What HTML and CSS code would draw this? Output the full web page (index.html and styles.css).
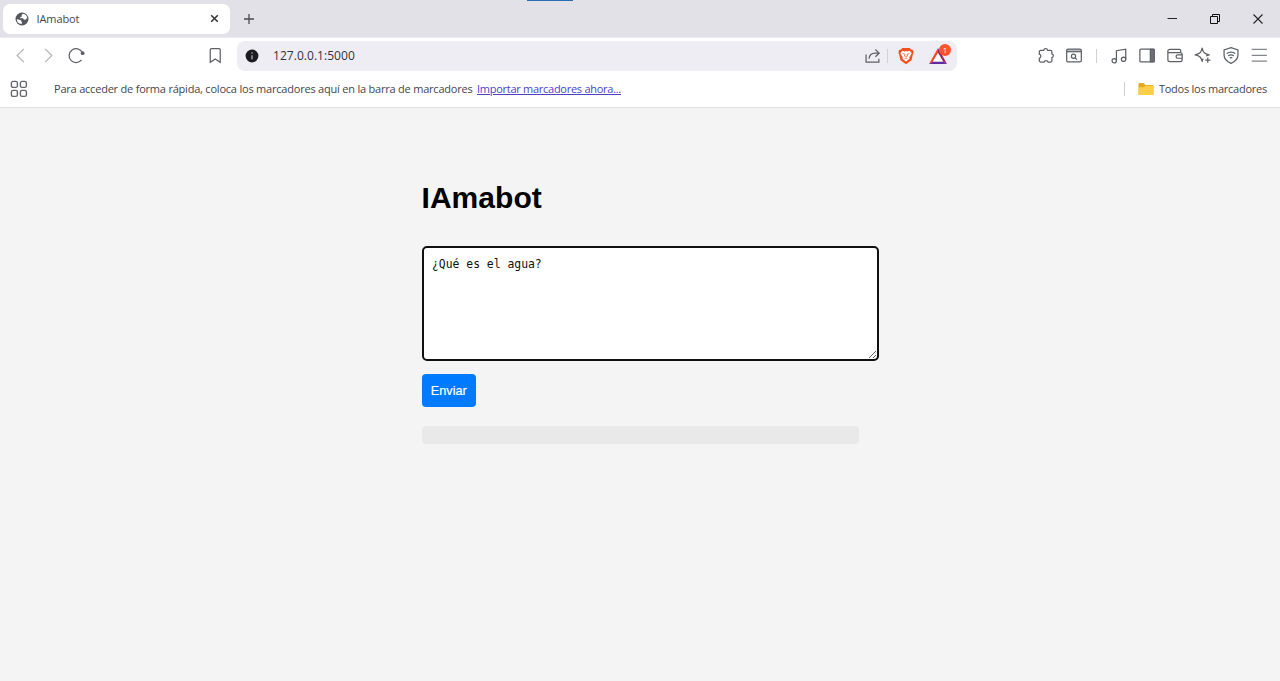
FILE: index.html
```
<!DOCTYPE html>
<html lang="es">
<head>
<meta charset="utf-8">
<title>IAmabot</title>
<link rel="stylesheet" href="styles.css">
</head>
<body>
<header class="browser">
  <div class="tabs">
    <span class="accent"></span>
    <div class="tab">
      <svg class="globe" width="14" height="14" viewBox="0 0 14 14"><circle cx="7" cy="7" r="6.500" fill="#55585d"/><path d="M8 1.800 6.500 3 7 4.500 5.200 5 5.400 6.200H8L9 7.700h1.400l1-1.300h.9A5.200 5.200 0 0 0 8 1.800ZM1.800 7.200 4.500 7.700 6.500 8.800 6.300 10 7.200 10.500 6.500 12A5.200 5.200 0 0 1 1.800 7.200Z" fill="#fff"/></svg>
      <span class="tab-title">IAmabot</span>
      <svg class="tab-close" width="9" height="9" viewBox="0 0 9 9"><path d="m1.200 1.200 6.600 6.600m0-6.600-6.600 6.600" stroke="#333" stroke-width="1.500"/></svg>
    </div>
    <svg class="new-tab" width="12" height="12" viewBox="0 0 12 12"><path d="M6 1v10M1 6h10" stroke="#4a4a50" stroke-width="1.300"/></svg>
    <div class="window-controls">
      <svg width="12" height="12" viewBox="0 0 12 12"><path d="M1.500 5.500h9.500" stroke="#222"/></svg>
      <svg width="12" height="12" viewBox="0 0 12 12"><path d="M1.500 3.500h7v7h-7zM3.500 3.500v-2h7v7h-2" fill="none" stroke="#111"/></svg>
      <svg width="12" height="12" viewBox="0 0 12 12"><path d="m1.500 1.500 9 9m0-9-9 9" stroke="#222" stroke-width="1.100"/></svg>
    </div>
  </div>
  <div class="toolbar">
    <svg class="icon faint" viewBox="0 0 20 20"><path d="m14 3-7 7 7 7"/></svg>
    <svg class="icon faint" viewBox="0 0 20 20"><path d="m7 3 7 7-7 7"/></svg>
    <svg class="icon" viewBox="0 0 20 20"><path d="M15.800 14.600A7.300 7.300 0 1 1 16.600 6.900"/><circle cx="17" cy="7.500" r="2" fill="#5f6067" stroke="none"/></svg>
    <svg class="icon bookmark" viewBox="0 0 20 20"><path d="M5 4a1.300 1.300 0 0 1 1.300-1.300h7.900A1.300 1.300 0 0 1 15.500 4v13.200l-5.200-3.500L5 17.200z"/></svg>
    <div class="address">
      <svg width="14" height="14" viewBox="0 0 14 14"><circle cx="7" cy="7" r="6.400" fill="#1b1b20"/><path d="M7 6.200v4" stroke="#aaa" stroke-width="1.400"/><circle cx="7" cy="4" r=".8" fill="#aaa"/></svg>
      <span class="url">127.0.0.1:5000</span>
      <svg class="icon share" viewBox="0 0 20 20"><path d="M2.700 9v8h13.500v-3.500M5.800 13.500c.3-4 3-6 6.700-6H16M12.500 3.700l4 3.800-4 3.800"/></svg>
      <span class="divider"></span>
      <svg class="shield" width="16" height="18" viewBox="0 0 16 18"><path d="M4.300 1h7.400l1.300 1.500 2 .5.600 2.500-.6 1.500-1.500 6.200L8 17.300l-5.500-4.100L1 7 .4 5.500 1 3l2-.5z" fill="#f4501e"/><path d="m4.300 3.800 2.400.6L8 4l1.300.4 2.400-.6 2 2.400-2.500 4.300.4 1.300L8 14.500l-3.600-2.700.4-1.300-2.500-4.300z" fill="#fff"/><path d="m4.500 6.500 2.500.8-.6 1.800L8 10l1.600-.9L9 7.300l2.500-.8M6.500 11.800 8 11l1.500.8" fill="none" stroke="#f4501e" stroke-width=".7"/></svg>
      <div class="rewards">
        <svg width="18" height="16" viewBox="0 0 18 16"><path d="M9 0 0 16l4-2.600L9 5z" fill="#ff4724"/><path d="m0 16 18-.1-4-2.500H4z" fill="#63299f"/><path d="m9 0 9 16-4-2.600L9 5z" fill="#9e1f63"/><path d="m9 5 5 8.400H4z" fill="#fff"/></svg>
        <span class="badge">1</span>
      </div>
    </div>
    <div class="actions">
      <svg class="icon" viewBox="0 0 20 20"><path d="M4.500 4.500h3a2.200 2.200 0 0 1 4.300 0h2.900a1.500 1.500 0 0 1 1.500 1.500v2.300a2 2 0 0 1 0 3.900v3.200a1.500 1.500 0 0 1-1.500 1.500h-2.500a2.200 2.200 0 0 0-4.200 0H4.500A1.500 1.500 0 0 1 3 15.400v-2.600a2.200 2.200 0 0 0 0-4.200V6a1.500 1.500 0 0 1 1.500-1.500z"/></svg>
      <svg class="icon" viewBox="0 0 20 20"><rect x="2.300" y="3.300" width="15.400" height="13.500" rx="1.500"/><path d="M2.500 6h15"/><path d="M2.500 4.500h15" opacity=".4" stroke-width="2"/><circle cx="9.500" cy="10.800" r="2.200"/><path d="m11 12.400 2 2"/></svg>
      <span class="divider"></span>
      <svg class="icon" viewBox="0 0 20 20"><circle cx="5" cy="15.500" r="2.300"/><circle cx="14.800" cy="14" r="2.300"/><path d="M7.300 15.500V5l9.800-1.700V14"/></svg>
      <svg class="icon" viewBox="0 0 20 20"><rect x="2.500" y="3.300" width="15" height="13.500" rx="1"/><path d="M13.500 3.500h4v13h-4z" fill="#6f7077"/></svg>
      <svg class="icon" viewBox="0 0 20 20"><path d="M16 7V4.800a1.300 1.300 0 0 0-1.300-1.300H4.500a2 2 0 0 0-2 2v9a2 2 0 0 0 2 2h11a2 2 0 0 0 2-2V9a2 2 0 0 0-2-2H3"/><path d="M17.500 9.300h-4.800a1.500 1.500 0 0 0-1.500 1.500v.6a1.500 1.500 0 0 0 1.500 1.500h4.800"/></svg>
      <svg class="icon" viewBox="0 0 20 20"><path d="M13.300 10.600c1-.6 2-1 3.200-1.300-5-1.100-6.400-2.500-7.400-7-1 4.500-2.400 5.900-7.400 7 5 1.100 6.400 2.500 7.400 7 .3-1.200.6-2.200 1.100-3M15 12v5.500M12.300 14.800h5.500" stroke-linejoin="round"/></svg>
      <svg class="icon" viewBox="0 0 20 20"><path d="m10 1.700 7.300 2.500v5.300c0 4-2.800 6.900-7.300 8.800-4.500-1.900-7.300-4.800-7.300-8.800V4.200z"/><path d="M5.500 8c2.800-2 6.200-2 9 0M7 10.300c2-1.300 4-1.300 6 0M8.700 12.500c1-.5 1.600-.5 2.600 0"/></svg>
      <svg class="icon menu" viewBox="0 0 20 20"><path d="M2.300 3.500h16M2.300 9.800h16M2.300 16h16"/></svg>
    </div>
  </div>
  <div class="bookmarks">
    <svg class="apps" width="18" height="18" viewBox="0 0 18 18"><g fill="none" stroke="#66676d" stroke-width="1.400"><rect x="1.400" y="1.400" width="6" height="6" rx="1.700"/><rect x="10.400" y="1.400" width="6" height="6" rx="1.700"/><rect x="1.400" y="10.400" width="6" height="6" rx="1.700"/><rect x="10.400" y="10.400" width="6" height="6" rx="1.700"/></g></svg>
    <span class="hint">Para acceder de forma rápida, coloca los marcadores aquí en la barra de marcadores</span>
    <a class="import">Importar marcadores ahora...</a>
    <span class="divider folder-divider"></span>
    <svg class="folder" width="16" height="14" viewBox="0 0 16 14"><path d="M.5 2A1 1 0 0 1 1.500 1h4L7.500 3h7a1 1 0 0 1 1 1v8a1 1 0 0 1-1 1h-13a1 1 0 0 1-1-1z" fill="#e5a920"/><path d="M.5 5.200h5.300L7.500 3.800h8V12a1 1 0 0 1-1 1h-13a1 1 0 0 1-1-1z" fill="#fbcf47"/></svg>
    <span class="all">Todos los marcadores</span>
  </div>
</header>
<main class="page">
  <h1 class="title">IAmabot</h1>
  <textarea class="question" spellcheck="false">¿Qué es el agua?</textarea>
  <button class="send">Enviar</button>
  <div class="answer"></div>
</main>
</body>
</html>
```
FILE: styles.css
```
* { box-sizing: border-box; }
body { margin: 0; height: 681px; overflow: hidden; background: #f4f4f4; font-family: "Liberation Sans", Arial, sans-serif; }
.browser { height: 108px; background: #fff; border-bottom: 1px solid #e0e0e2; font-family: "Open Sans", "Noto Sans", sans-serif; color: #45464b; }
.tabs { position: relative; height: 38px; background: #e2e1e8; display: flex; align-items: center; padding-left: 3px; border-bottom: 1px solid #ececf0; }
.accent { position: absolute; top: 0; left: 527px; width: 46px; height: 1px; background: #2b6cab; }
.tab { width: 227px; height: 30px; background: #fff; border-radius: 7px; display: flex; align-items: center; padding: 0 11px 0 12px; }
.tab-title { margin-left: 7.5px; font-size: 11px; letter-spacing: -.1px; }
.tab-close { margin-left: auto; }
.new-tab { margin-left: 13px; }
.window-controls { margin-left: auto; display: flex; gap: 31px; padding-right: 16px; }
.toolbar { height: 36px; display: flex; align-items: center; padding: 0 7px 1px 6px; }
.icon { width: 28px; height: 19px; flex: none; fill: none; stroke: #5f6067; stroke-width: 1.3; }
.faint { stroke: #b5b5b9; }
.menu { stroke: #85868b; }
.bookmark { margin-left: 111px; }
.address { width: 720px; height: 30px; margin-left: 8px; background: #eeedf3; border-radius: 8px; display: flex; align-items: center; padding: 0 8px; }
.url { margin-left: 14px; font-size: 12px; letter-spacing: .04px; color: #33343a; }
.share { margin-left: auto; }
.divider { width: 1px; height: 14px; background: #d0d0d6; }
.shield { margin-left: 10px; }
.rewards { position: relative; margin-left: 15px; width: 18px; height: 16px; margin-right: 2px; }
.rewards svg { display: block; }
.badge { position: absolute; left: 10px; top: -4px; width: 12px; height: 12px; border-radius: 50%; background: #fb542b; color: #fff; font-size: 8px; line-height: 12px; text-align: center; }
.actions { margin-left: auto; display: flex; align-items: center; }
.actions .divider { margin: 0 8px; }
.bookmarks { height: 33px; display: flex; align-items: center; padding: 0 13px 3px 10px; font-size: 11px; line-height: 15px; white-space: nowrap; }
.hint { margin: 0 0 2px 26px; letter-spacing: -.21px; }
.import { margin: 0 0 2px 4.5px; color: #4c43c8; text-decoration: underline; letter-spacing: -.27px; }
.folder-divider { margin-left: auto; }
.folder { margin-left: 13px; }
.all { margin: 0 0 2px 5px; letter-spacing: -.25px; }
.page { width: 437px; margin: 0 0 0 421.5px; padding-top: 72px; display: flex; flex-direction: column; align-items: flex-start; }
.title { margin: 0; font-size: 30px; line-height: 35px; letter-spacing: .05px; color: #000; }
.question { width: 457.5px; height: 115px; margin-top: 31px; padding: 9px 8.5px; border: 2px solid #101010; border-radius: 5px; outline: 0; background: #fff; color: #111; font: 11.4px/15px "DejaVu Sans Mono", monospace; resize: vertical; }
.send { margin-top: 13px; width: 54.5px; height: 33px; padding: 0; border: 0; border-radius: 4px; background: #007bff; color: #fff; font: 12.7px "Liberation Sans", Arial, sans-serif; -webkit-text-stroke: .2px #fff; }
.answer { margin-top: 18.5px; width: 100%; height: 18.5px; border-radius: 4px; background: #e9e9e9; }
```
